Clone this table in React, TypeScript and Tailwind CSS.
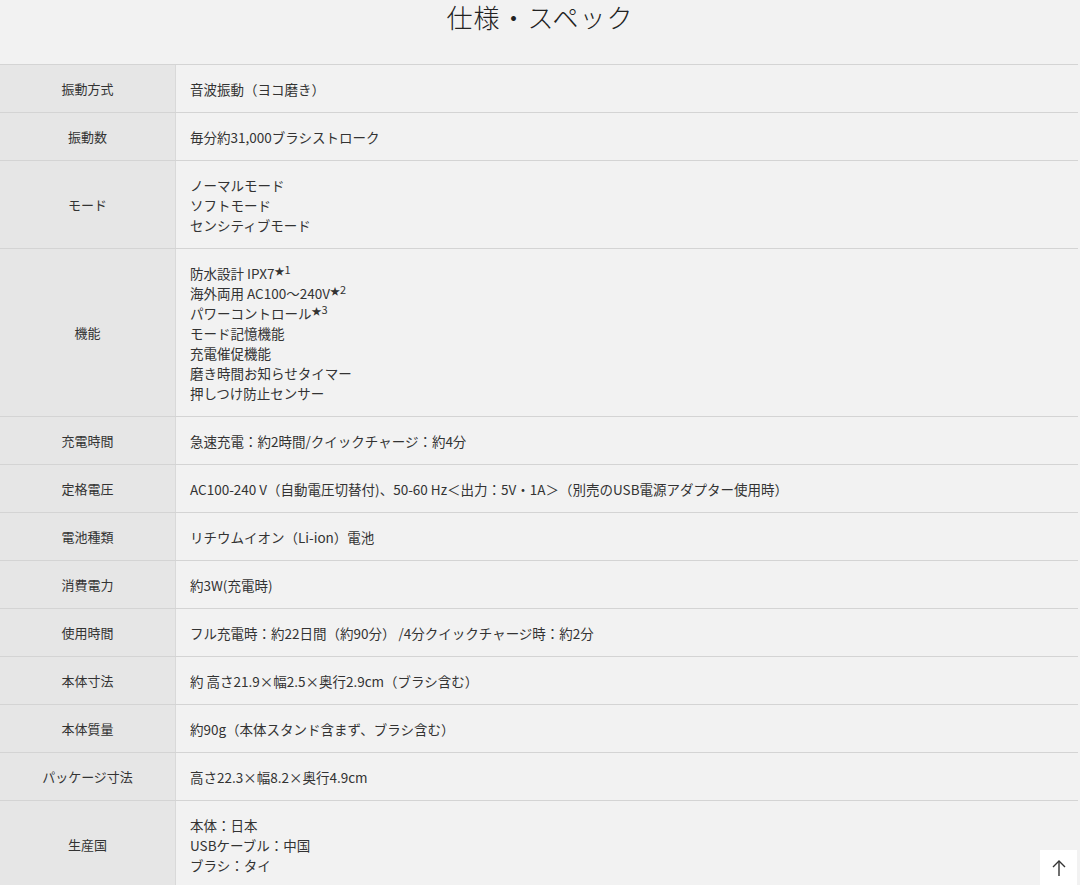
import { ReactNode } from 'react';

// Spec rows: label + one or more lines of value text
interface SpecRow {
  label: string;
  lines: ReactNode[];
}

// Footnote marker (★n) shown after a feature
const Note = ({ n }: { n: number }) => (
  <span className="align-[4px] text-[10px] leading-none">
    ★<span className="align-[1px] text-[11px]">{n}</span>
  </span>
);

const SPECS: SpecRow[] = [
  { label: '振動方式', lines: ['音波振動（ヨコ磨き）'] },
  { label: '振動数', lines: ['毎分約31,000ブラシストローク'] },
  { label: 'モード', lines: ['ノーマルモード', 'ソフトモード', 'センシティブモード'] },
  {
    label: '機能',
    lines: [
      <>防水設計 IPX7<Note n={1} /></>,
      <>海外両用 AC100〜240V<Note n={2} /></>,
      <>パワーコントロール<Note n={3} /></>,
      'モード記憶機能',
      '充電催促機能',
      '磨き時間お知らせタイマー',
      '押しつけ防止センサー',
    ],
  },
  { label: '充電時間', lines: ['急速充電：約2時間/クイックチャージ：約4分'] },
  {
    label: '定格電圧',
    lines: ['AC100-240 V（自動電圧切替付)、50-60 Hz＜出力：5V・1A＞（別売のUSB電源アダプター使用時）'],
  },
  { label: '電池種類', lines: ['リチウムイオン（Li-ion）電池'] },
  { label: '消費電力', lines: ['約3W(充電時)'] },
  { label: '使用時間', lines: ['フル充電時：約22日間（約90分） /4分クイックチャージ時：約2分'] },
  { label: '本体寸法', lines: ['約 高さ21.9×幅2.5×奥行2.9cm（ブラシ含む）'] },
  { label: '本体質量', lines: ['約90g（本体スタンド含まず、ブラシ含む）'] },
  { label: 'パッケージ寸法', lines: ['高さ22.3×幅8.2×奥行4.9cm'] },
  { label: '生産国', lines: ['本体：日本', 'USBケーブル：中国', 'ブラシ：タイ'] },
];

export default function App() {
  return (
    <div className="min-h-screen bg-[#f2f2f2] text-[#333] font-['Noto_Sans_CJK_JP','Noto_Sans',sans-serif]">
      {/* Heading */}
      <div className="h-[64px] flex justify-center">
        <h2 className="text-[26px] leading-[34px] font-light text-[#222] tracking-[1px]">仕様・スペック</h2>
      </div>

      {/* Spec table */}
      <div className="w-[1078px] border-t border-[#d4d4d4]">
        {SPECS.map((row) => (
          <div key={row.label} className="flex border-b border-[#d4d4d4]">
            <div className="w-[176px] shrink-0 bg-[#e6e6e6] border-r border-[#d9d9d9] flex items-center justify-center text-[13px] leading-[20px]">
              {row.label}
            </div>
            <div className="flex-1 flex flex-col px-[14px] pt-[14px] pb-[13px] text-[13.5px] leading-[20px]">
              {row.lines.map((line, i) => (
                <div key={i}>{line}</div>
              ))}
            </div>
          </div>
        ))}
      </div>

      {/* Back to top */}
      <button className="fixed right-[3px] bottom-0 w-[37px] h-[35px] bg-white flex items-center justify-center text-[#333]">
        <svg width="16" height="18" viewBox="0 0 16 18" fill="none" stroke="currentColor" strokeWidth="1.4">
          <path d="M8 17V2" />
          <path d="M2 8l6-6 6 6" />
        </svg>
      </button>
    </div>
  );
}
